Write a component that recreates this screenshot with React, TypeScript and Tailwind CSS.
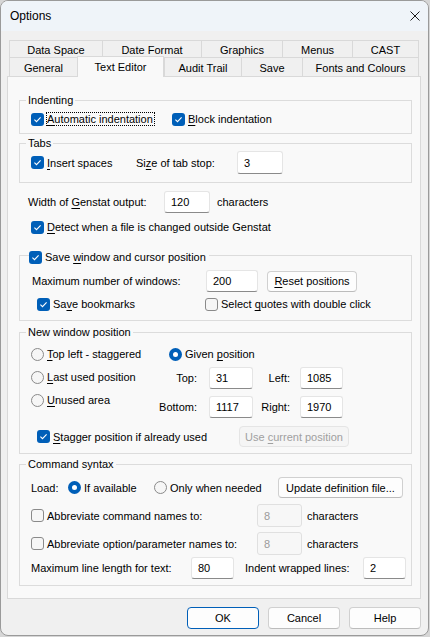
import React from 'react';

// access key underline
const K: React.FC<{ children: React.ReactNode }> = ({ children }) => (
  <span className="underline decoration-1 underline-offset-[2px]">{children}</span>
);

const Check: React.FC<{ on?: boolean }> = ({ on }) =>
  on ? (
    <span className="flex h-[13px] w-[13px] shrink-0 items-center justify-center rounded-[3px] bg-[#005fb8]">
      <svg width="9" height="9" viewBox="0 0 9 9">
        <path d="M1.4 4.6 L3.5 6.6 L7.6 2.3" fill="none" stroke="#ffffff" strokeWidth="1.1" />
      </svg>
    </span>
  ) : (
    <span className="h-[13px] w-[13px] shrink-0 rounded-[3px] border border-[#8a8a8a] bg-[#f6f6f6]" />
  );

const Radio: React.FC<{ on?: boolean }> = ({ on }) =>
  on ? (
    <span className="flex h-[13px] w-[13px] shrink-0 items-center justify-center rounded-full bg-[#005fb8]">
      <span className="h-[5px] w-[5px] rounded-full bg-white" />
    </span>
  ) : (
    <span className="h-[13px] w-[13px] shrink-0 rounded-full border border-[#8a8a8a] bg-[#f6f6f6]" />
  );

const Field: React.FC<{ value: string; className: string; disabled?: boolean }> = ({ value, className, disabled }) => (
  <div
    className={`flex h-full items-center rounded-[3px] border pl-[6px] ${
      disabled
        ? 'border-[#e0e0e0] bg-[#f7f7f7] text-[#9b9b9b]'
        : 'border-[#e5e5e5] border-b-[#8a8a8a] bg-white text-black'
    } ${className}`}
  >
    {value}
  </div>
);

const Btn: React.FC<{ children: React.ReactNode; className: string; disabled?: boolean; focus?: boolean }> = ({
  children,
  className,
  disabled,
  focus,
}) => (
  <div
    className={`flex items-center justify-center rounded-[4px] border ${
      disabled
        ? 'border-[#e5e5e5] bg-[#f5f5f5] text-[#a0a0a0]'
        : focus
        ? 'border-[#005fb8] bg-[#fdfdfd] text-black'
        : 'border-[#d0d0d0] border-b-[#bcbcbc] bg-[#fdfdfd] text-black'
    } ${className}`}
  >
    {children}
  </div>
);

const tabsBack = [
  { name: 'Data Space', w: 'w-[93px]' },
  { name: 'Date Format', w: 'w-[99px]' },
  { name: 'Graphics', w: 'w-[81px]' },
  { name: 'Menus', w: 'w-[70px]' },
  { name: 'CAST', w: 'w-[67px] border-r' },
];

const tabsFront = [
  { name: 'General', w: 'w-[68px]' },
  { name: 'Text Editor', w: 'w-[87px]', active: true },
  { name: 'Audit Trail', w: 'w-[77px]' },
  { name: 'Save', w: 'w-[61px]' },
  { name: 'Fonts and Colours', w: 'w-[117px] border-r' },
];

export default function App() {
  return (
    <div className="h-[637px] w-[430px] bg-[#d6d6d6] font-['Liberation_Sans',Arial,sans-serif] text-[11px] leading-[14px] text-black">
      <div className="flex h-[636px] w-[429px] flex-col overflow-hidden rounded-[8px] border border-[#9a9a9a] bg-[#f0f0f0]">
        {/* title bar */}
        <div className="flex h-[30px] shrink-0 items-center bg-[#eff4f9] pl-[9px] text-[12px]">
          <span>Options</span>
          <svg className="ml-auto mr-[8px]" width="10" height="10" viewBox="0 0 10 10">
            <path d="M0.5 0.5 L9.5 9.5 M9.5 0.5 L0.5 9.5" stroke="#1b1b1b" strokeWidth="1" />
          </svg>
        </div>

        {/* tabs */}
        <div className="ml-[8px] mt-[9px] flex h-[17px]">
          {tabsBack.map((t) => (
            <div
              key={t.name}
              className={`flex items-center justify-center border-l border-t border-[#d9d9d9] bg-[#f0f0f0] pt-[1px] ${t.w}`}
            >
              {t.name}
            </div>
          ))}
        </div>
        <div className="ml-[8px] flex h-[19px] items-start">
          {tabsFront.map((t) =>
            t.active ? (
              <div
                key={t.name}
                className={`relative z-10 -mt-[1px] flex h-[21px] items-start justify-center border-x border-t border-[#d9d9d9] bg-[#f9f9f9] pt-[3px] ${t.w}`}
              >
                {t.name}
              </div>
            ) : (
              <div
                key={t.name}
                className={`flex h-[19px] items-center justify-center border-l border-t border-[#d9d9d9] bg-[#f0f0f0] pt-[1px] ${t.w}`}
              >
                {t.name}
              </div>
            )
          )}
        </div>

        {/* tab page */}
        <div className="ml-[6px] flex h-[523px] w-[414px] flex-col border border-[#d9d9d9] bg-[#f9f9f9] px-[11px]">
          {/* Indenting */}
          <div className="mt-[23px] h-[34px] w-[393px] border border-[#dcdcdc]">
            <div className="-mt-[8px] ml-[6px] h-[14px] w-fit bg-[#f9f9f9] px-[2px]">Indenting</div>
            <div className="mt-[4px] flex h-[16px] items-center pl-[11px]">
              <div className="flex w-[141px] items-center">
                <Check on />
                <span className="ml-[2px] border border-dotted border-black pr-[1px] leading-[12px]">
                  <K>A</K>utomatic indentation
                </span>
              </div>
              <div className="flex items-center gap-[3px]">
                <Check on />
                <span>
                  <K>B</K>lock indentation
                </span>
              </div>
            </div>
          </div>

          {/* Tabs */}
          <div className="mt-[9px] h-[40px] w-[393px] border border-[#dcdcdc]">
            <div className="-mt-[8px] ml-[6px] h-[14px] w-fit bg-[#f9f9f9] px-[2px]">Tabs</div>
            <div className="mt-[1px] flex h-[23px] items-center pl-[11px]">
              <div className="flex w-[105px] items-center gap-[3px]">
                <Check on />
                <span>
                  <K>I</K>nsert spaces
                </span>
              </div>
              <span className="w-[101px]">
                Si<K>z</K>e of tab stop:
              </span>
              <Field value="3" className="w-[46px]" />
            </div>
          </div>

          {/* width of output */}
          <div className="mt-[8px] flex h-[22px] items-center pl-[9px]">
            <span className="w-[136px]">
              Width of <K>G</K>enstat output:
            </span>
            <Field value="120" className="w-[46px]" />
            <span className="ml-[7px]">characters</span>
          </div>

          <div className="mt-[6px] flex h-[16px] items-center gap-[3px] pl-[12px]">
            <Check on />
            <span>
              <K>D</K>etect when a file is changed outside Genstat
            </span>
          </div>

          {/* Save window and cursor position */}
          <div className="mt-[20px] h-[66px] w-[393px] border border-[#dcdcdc]">
            <div className="-mt-[7px] ml-[9px] flex h-[16px] w-fit items-center gap-[3px] bg-[#f9f9f9] pr-[3px]">
              <Check on />
              <span>
                Save <K>w</K>indow and cursor position
              </span>
            </div>
            <div className="mt-[5px] flex h-[22px] items-center pl-[12px]">
              <span className="w-[174px]">Maximum number of windows:</span>
              <Field value="200" className="w-[52px]" />
              <Btn className="ml-[9px] h-[21px] w-[90px]">
                <span>
                  <K>R</K>eset positions
                </span>
              </Btn>
            </div>
            <div className="mt-[4px] flex h-[16px] items-center pl-[17px]">
              <div className="flex w-[168px] items-center gap-[3px]">
                <Check on />
                <span>
                  Sa<K>v</K>e bookmarks
                </span>
              </div>
              <div className="flex items-center gap-[3px]">
                <Check />
                <span>
                  Select <K>q</K>uotes with double click
                </span>
              </div>
            </div>
          </div>

          {/* New window position */}
          <div className="mt-[11px] h-[122px] w-[393px] border border-[#dcdcdc]">
            <div className="-mt-[8px] ml-[6px] h-[14px] w-fit bg-[#f9f9f9] px-[2px]">New window position</div>
            <div className="mt-[7px] flex items-start pl-[11px]">
              {/* radio column */}
              <div className="flex w-[120px] flex-col gap-[7px]">
                <div className="flex h-[16px] items-center gap-[3px]">
                  <Radio />
                  <span>
                    <K>T</K>op left - staggered
                  </span>
                </div>
                <div className="flex h-[16px] items-center gap-[3px]">
                  <Radio />
                  <span>
                    <K>L</K>ast used position
                  </span>
                </div>
                <div className="flex h-[16px] items-center gap-[3px]">
                  <Radio />
                  <span>
                    <K>U</K>nused area
                  </span>
                </div>
              </div>
              {/* given position column */}
              <div className="flex flex-col">
                <div className="flex h-[16px] items-center gap-[3px] pl-[18px]">
                  <Radio on />
                  <span>
                    Given <K>p</K>osition
                  </span>
                </div>
                <div className="mt-[5px] flex h-[22px] items-center">
                  <span className="w-[46px] text-right">Top:</span>
                  <Field value="31" className="ml-[12px] w-[44px]" />
                  <span className="w-[37px] text-right">Left:</span>
                  <Field value="1085" className="ml-[10px] w-[43px]" />
                </div>
                <div className="mt-[7px] flex h-[22px] items-center">
                  <span className="w-[46px] text-right">Bottom:</span>
                  <Field value="1117" className="ml-[12px] w-[44px]" />
                  <span className="w-[37px] text-right">Right:</span>
                  <Field value="1970" className="ml-[10px] w-[43px]" />
                </div>
              </div>
            </div>
            <div className="mt-[8px] flex h-[21px] items-center pl-[17px]">
              <div className="flex w-[202px] items-center gap-[3px]">
                <Check on />
                <span>
                  <K>S</K>tagger position if already used
                </span>
              </div>
              <Btn disabled className="h-[21px] w-[110px]">
                <span>
                  Use <K>c</K>urrent position
                </span>
              </Btn>
            </div>
          </div>

          {/* Command syntax */}
          <div className="mt-[10px] h-[122px] w-[393px] border border-[#dcdcdc]">
            <div className="-mt-[8px] ml-[6px] h-[14px] w-fit bg-[#f9f9f9] px-[2px]">Command syntax</div>
            <div className="mt-[6px] flex h-[21px] items-center pl-[11px]">
              <span className="w-[37px]">Load:</span>
              <div className="flex w-[86px] items-center gap-[3px]">
                <Radio on />
                <span>If available</span>
              </div>
              <div className="flex w-[124px] items-center gap-[3px]">
                <Radio />
                <span>Only when needed</span>
              </div>
              <Btn className="h-[21px] w-[125px]">Update definition file...</Btn>
            </div>
            <div className="mt-[6px] flex h-[23px] items-center pl-[11px]">
              <div className="flex w-[226px] items-center gap-[3px]">
                <Check />
                <span>Abbreviate command names to:</span>
              </div>
              <Field value="8" disabled className="w-[45px]" />
              <span className="ml-[5px]">characters</span>
            </div>
            <div className="mt-[5px] flex h-[23px] items-center pl-[11px]">
              <div className="flex w-[226px] items-center gap-[3px]">
                <Check />
                <span>Abbreviate option/parameter names to:</span>
              </div>
              <Field value="8" disabled className="w-[45px]" />
              <span className="ml-[5px]">characters</span>
            </div>
            <div className="mt-[2px] flex h-[22px] items-center pl-[11px]">
              <span className="w-[160px]">Maximum line length for text:</span>
              <Field value="80" className="w-[43px]" />
              <span className="ml-[11px] w-[118px]">Indent wrapped lines:</span>
              <Field value="2" className="w-[43px]" />
            </div>
          </div>
        </div>

        {/* dialog buttons */}
        <div className="ml-[186px] mt-[8px] flex h-[22px] gap-[9px]">
          <Btn focus className="h-[22px] w-[72px]">
            OK
          </Btn>
          <Btn className="h-[22px] w-[72px]">Cancel</Btn>
          <Btn className="h-[22px] w-[72px]">Help</Btn>
        </div>
      </div>
    </div>
  );
}
